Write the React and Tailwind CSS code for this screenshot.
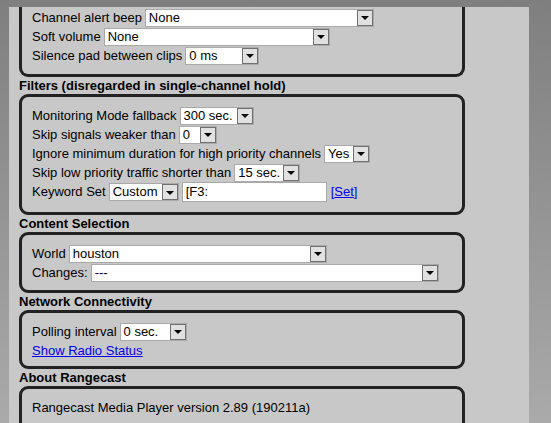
import React from 'react';

function Select({ value, className }) {
  return (
    <span className={`inline-flex h-[18px] border border-[#a9a9a9] bg-white align-middle ${className}`}>
      <span className="flex-1 overflow-hidden whitespace-nowrap pl-[3px] leading-[16px]">{value}</span>
      <span className="flex w-[16px] items-center justify-center border border-[#707070] bg-[#e1e1e1]">
        <span className="mt-[1px] h-0 w-0 border-x-[4px] border-t-[4px] border-x-transparent border-t-black" />
      </span>
    </span>
  );
}

function Row({ children }) {
  return <div className="flex h-[19px] items-center whitespace-nowrap">{children}</div>;
}

function Header({ children }) {
  return <div className="h-[17px] pl-[10px] font-bold leading-[17px]">{children}</div>;
}

// padding and top edge are passed in whole so no two classes fight
function Box({ children, className = 'rounded-[9px] border-[3px] pt-[9px] pb-[8px]' }) {
  return (
    <div className={`ml-[10px] w-[446px] border-[#222222] pl-[10px] ${className}`}>
      {children}
    </div>
  );
}

export default function App() {
  return (
    <div
      className="h-[423px] w-[551px] overflow-hidden bg-gradient-to-b from-[#7f7f7f] to-[#aaaaaa] pl-[9px] pt-[7px] text-[13px] text-black"
      style={{ fontFamily: '"Liberation Sans", Arial, sans-serif' }}
    >
      <div className="h-[430px] w-[520px] bg-[#c8c8c8]">
        <Box className="rounded-b-[9px] border-x-[3px] border-b-[3px] pt-[1px] pb-[9px]">
          <Row>
            Channel alert beep <Select value="None" className="ml-[3px] w-[229px]" />
          </Row>
          <Row>
            Soft volume <Select value="None" className="ml-[3px] w-[226px]" />
          </Row>
          <Row>
            Silence pad between clips <Select value="0 ms" className="ml-[3px] w-[74px]" />
          </Row>
        </Box>

        <Header>Filters (disregarded in single-channel hold)</Header>
        <Box className="rounded-[9px] border-[3px] pt-[9px] pb-[10px]">
          <Row>
            Monitoring Mode fallback <Select value="300 sec." className="ml-[3px] w-[74px]" />
          </Row>
          <Row>
            Skip signals weaker than <Select value="0" className="ml-[3px] w-[38px]" />
          </Row>
          <Row>
            Ignore minimum duration for high priority channels <Select value="Yes" className="ml-[3px] w-[46px]" />
          </Row>
          <Row>
            Skip low priority traffic shorter than <Select value="15 sec." className="ml-[3px] w-[66px]" />
          </Row>
          <div className="flex h-[20px] items-center whitespace-nowrap">
            Keyword Set <Select value="Custom" className="ml-[3px] w-[70px]" />
            <span className="ml-[3px] inline-flex h-[20px] w-[145px] items-center border border-[#a9a9a9] bg-white pl-[3px]">
              [F3:
            </span>
            <span className="ml-[4px] text-[#0000ee]">
              [<span className="underline">Set</span>]
            </span>
          </div>
        </Box>

        <Header>Content Selection</Header>
        <Box>
          <Row>
            World <Select value="houston" className="ml-[3px] w-[258px]" />
          </Row>
          <Row>
            Changes: <Select value="---" className="ml-[3px] w-[348px]" />
          </Row>
        </Box>

        <Header>Network Connectivity</Header>
        <Box className="rounded-[9px] border-[3px] pt-[9px] pb-[6px]">
          <Row>
            Polling interval <Select value="0 sec." className="ml-[3px] w-[67px]" />
          </Row>
          <Row>
            <span className="text-[#0000ee] underline">Show Radio Status</span>
          </Row>
        </Box>

        <Header>About Rangecast</Header>
        <Box>
          <Row>Rangecast Media Player version 2.89 (190211a)</Row>
          <div className="h-[30px]" />
        </Box>
      </div>
    </div>
  );
}
